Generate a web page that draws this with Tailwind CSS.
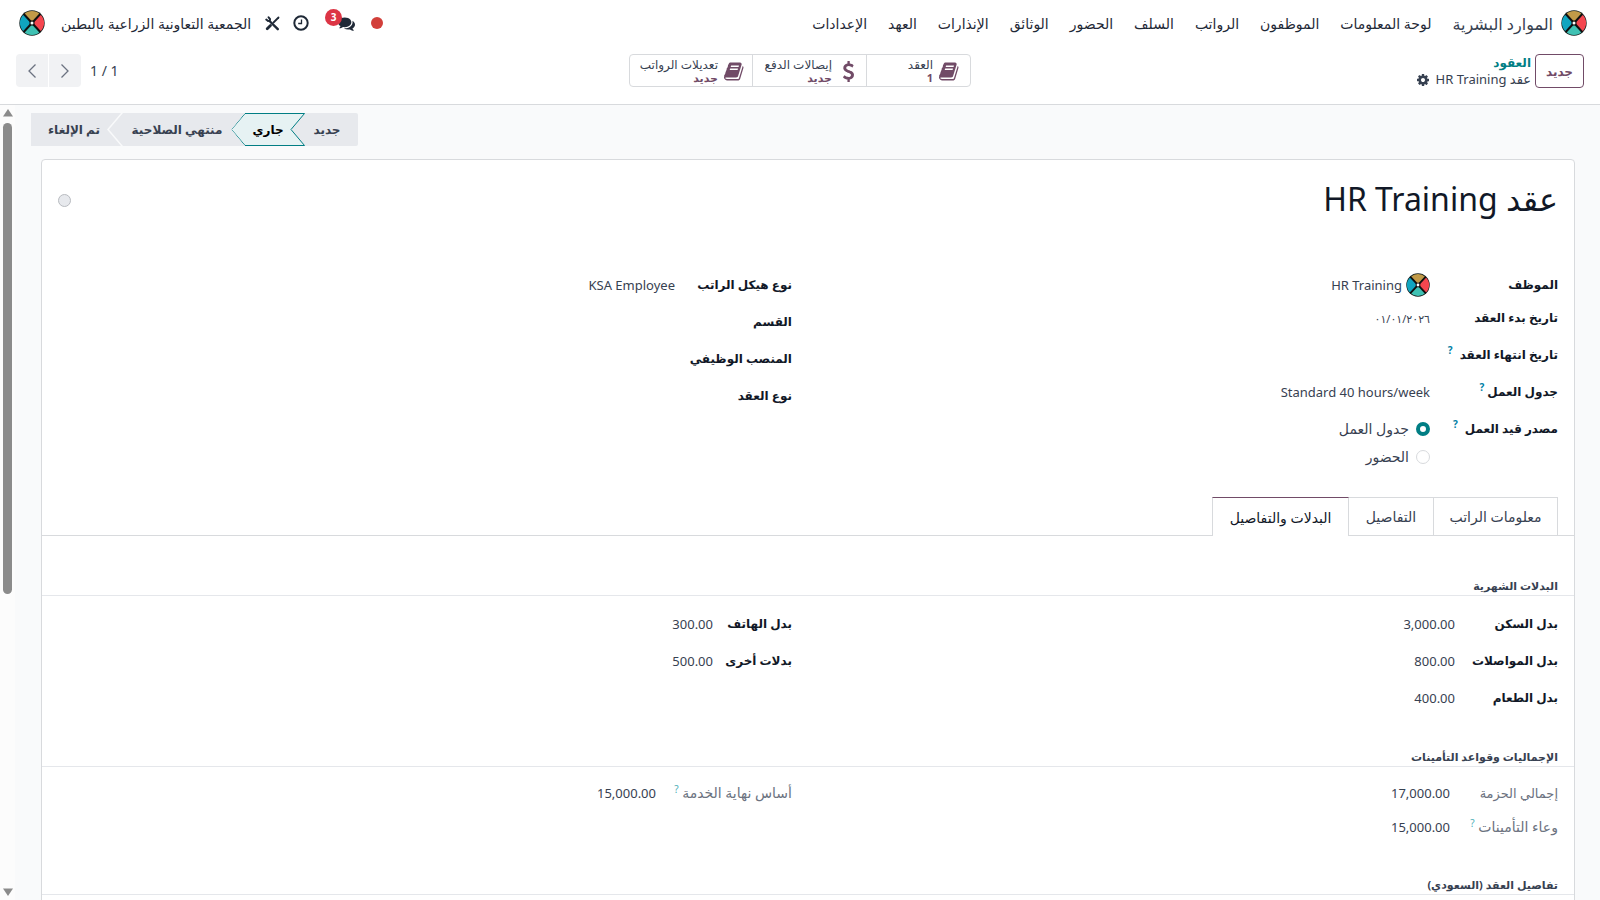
<!DOCTYPE html>
<html lang="ar" dir="rtl">
<head>
  <meta charset="UTF-8" />
  <meta name="viewport" content="width=device-width, initial-scale=1.0" />
  <title>عقد HR Training</title>
  <script src="https://cdn.jsdelivr.net/npm/@tailwindcss/browser@4"></script>
</head>
<body class="h-screen flex flex-col overflow-hidden bg-white text-[13px] text-[#374151] font-['Noto_Sans','DejaVu_Sans',sans-serif]">
  <!-- Shared icons -->
  <svg class="hidden" xmlns="http://www.w3.org/2000/svg">
    <symbol id="logo" viewBox="0 0 26 26">
      <circle cx="13" cy="13" r="12.700" fill="#14201f" />
      <path d="M13 13 5 4.200a11.500 11.500 0 0 1 16 0z" fill="#c19a48" />
      <path d="M13 13 5 21.800a11.500 11.500 0 0 0 16 0z" fill="#3fc1b3" />
      <path d="M13 13 5 4.200a11.500 11.500 0 0 0 0 17.600z" fill="#10a5c0" />
      <path d="M13 13 21 4.200a11.500 11.500 0 0 1 0 17.600z" fill="#f5464f" />
      <path d="M4.500 3.800 21.500 22.200M21.500 3.800 4.500 22.200" stroke="#101010" stroke-width="2" />
      <rect x="10.500" y="10.500" width="5" height="5" rx="1" fill="#101010" />
      <circle cx="13" cy="13" r="1.500" fill="#fff" />
    </symbol>
    <symbol id="book" viewBox="0 0 1792 1792">
      <path d="M1639 478q40 57 18 129l-275 906q-19 64-76.500 107.500t-122.500 43.500h-923q-77 0-148.500-53.500t-99.500-131.500q-24-67-2-127 0-4 3-27t4-37q1-8-3-21.500t-3-19.500q2-11 8-21t16.500-23.500 16.500-23.500q23-38 45-91.500t30-91.500q3-10 .5-30t-.5-28q3-11 17-28t17-23q21-36 42-92t25-90q1-9-2.500-32t.5-28q4-13 22-30.500t22-22.500q19-26 42.500-84.500t27.500-96.500q1-8-3-25.500t-2-26.500q2-8 9-18t18-23 17-21q8-12 16.500-30.500t15-35 16-36 19.500-32 26.500-23.500 36-11.500 47.500 5.500l-1 3q38-9 51-9h761q74 0 114 56t18 130l-274 906q-36 119-71.500 153.500t-128.500 34.500h-869q-27 0-38 15-11 16-1 43 24 70 144 70h923q29 0 56-15.500t35-41.500l300-987q7-22 5-57 38 15 59 43zm-1064 2q-4 13 2 22.500t20 9.500h608q13 0 25.500-9.500t16.500-22.500l21-64q4-13-2-22.500t-20-9.500h-608q-13 0-25.500 9.500t-16.500 22.500zm-83 256q-4 13 2 22.500t20 9.500h608q13 0 25.500-9.500t16.500-22.500l21-64q4-13-2-22.500t-20-9.500h-608q-13 0-25.500 9.500t-16.500 22.500z" />
    </symbol>
  </svg>

  <!-- Top navbar -->
  <header class="flex h-[46px] shrink-0 items-center ps-[13px] pe-[19px] text-[#1f2937]">
    <a href="#" aria-label="الرئيسية"><svg class="size-[26px]"><use href="#logo" /></svg></a>
    <a href="#" class="ms-2 me-[21px] pt-px text-[16px] text-[#374151]">الموارد البشرية</a>
    <nav class="flex items-center gap-[21px] pt-px text-[14px]">
      <a href="#">لوحة المعلومات</a>
      <a href="#">الموظفون</a>
      <a href="#">الرواتب</a>
      <a href="#">السلف</a>
      <a href="#">الحضور</a>
      <a href="#">الوثائق</a>
      <a href="#">الإنذارات</a>
      <a href="#">العهد</a>
      <a href="#">الإعدادات</a>
    </nav>
    <div class="ms-auto flex items-center">
      <span class="me-4 size-3 rounded-full bg-[#d23f3a]"></span>
      <button class="relative me-4" aria-label="المحادثات">
        <svg class="size-[17px]" viewBox="0 0 1792 1792" fill="currentColor"><path d="M1408 768q0 139-94 257t-256.500 186.500-353.500 68.500q-86 0-176-16-124 88-278 128-36 9-86 16h-3q-11 0-20.500-8t-11.500-21q-1-3-1-6.500t.5-6.500 2-6l2.500-5t3.500-5.500 4-5 4.500-5 4-4.500q5-6 23-25t26-29.500 22.500-29 25-38.500 20.500-44q-124-72-195-177t-71-224q0-139 94-257t256.500-186.500 353.500-68.500 353.500 68.500 256.500 186.500 94 257zm384 256q0 120-71 224.500t-195 176.500q10 24 20.500 44t25 38.500 22.500 29 26 29.500 23 25q1 1 4 4.500t4.500 5 4 5 3.500 5.500l2.500 5t2 6 .5 6.500-1 6.500q-3 14-13 22t-22 7q-50-7-86-16-154-40-278-128-90 16-176 16-271 0-472-132 58 4 88 4 161 0 309-45t264-129q125-92 192-212t67-254q0-77-23-152 129 71 204 178t75 230z" /></svg>
        <span class="absolute -top-[6px] left-[-13px] flex size-[17px] items-center justify-center rounded-full bg-[#dc3545] text-[10px] font-bold text-white">3</span>
      </button>
      <button class="ms-[13px] me-[13px]" aria-label="الأنشطة">
        <svg class="size-4" viewBox="0 0 16 16" fill="none" stroke="currentColor" stroke-width="2"><circle cx="8" cy="8" r="6.700" /><path d="M8.500 4.500v4H5.200" stroke-width="1.300" /></svg>
      </button>
      <button class="me-[14px]" aria-label="أدوات المطور">
        <svg class="size-[15px]" viewBox="0 0 15 15" fill="none" stroke="currentColor" stroke-linecap="round"><path d="M5 5.500 12.800 13.200" stroke-width="2.400" /><path d="M1.300 3.600 3 5 4.800 4.800 5 3 3.600 1.300" stroke-width="2" /><path d="M13.500 1.500 8.500 6.500" stroke-width="1.800" /><path d="M5.500 9.500 2.200 12.800" stroke-width="2.800" /></svg>
      </button>
      <button class="me-4 pt-px text-[14px]">الجمعية التعاونية الزراعية بالبطين</button>
      <button aria-label="المستخدم"><svg class="size-[26px]"><use href="#logo" /></svg></button>
    </div>
  </header>

  <!-- Control panel -->
  <div class="grid h-[59px] shrink-0 grid-cols-[1fr_auto_1fr] items-start border-b border-[#d8dadd] px-4 pt-2">
    <div class="flex gap-1">
      <button class="h-[34px] w-[49px] rounded border border-[#714b67] pt-px text-[12px] font-bold text-[#714b67]">جديد</button>
      <div class="text-[13px] leading-[17px]">
        <a href="#" class="block text-[12px] font-bold text-[#017e84]">العقود</a>
        <div class="flex items-center gap-[6px]">
          <span>عقد HR Training</span>
          <button aria-label="إجراءات"><svg class="size-[14px]" viewBox="0 0 1792 1792" fill="currentColor"><path d="M1152 896q0-106-75-181t-181-75-181 75-75 181 75 181 181 75 181-75 75-181zm512-109v222q0 12-8 23t-20 13l-185 28q-19 54-39 91 35 50 107 138 10 12 10 25t-9 23q-27 37-99 108t-94 71q-12 0-26-9l-138-108q-44 23-91 38-16 136-29 186-7 28-36 28h-222q-14 0-24.500-8.500t-11.500-21.500l-28-184q-49-16-90-37l-141 107q-10 9-25 9-14 0-25-11-126-114-165-168-7-10-7-23 0-12 8-23 15-21 51-66.500t54-70.500q-27-50-41-99l-183-27q-13-2-21-12.500t-8-23.500v-222q0-12 8-23t19-13l186-28q14-46 39-92-40-57-107-138-10-12-10-24 0-10 9-23 26-36 98.500-107.500t94.500-71.500q13 0 26 10l138 107q44-23 91-38 16-136 29-186 7-28 36-28h222q14 0 24.500 8.500t11.500 21.500l28 184q49 16 90 37l142-107q9-9 24-9 13 0 25 10 129 119 165 170 7 8 7 22 0 12-8 23-15 21-51 66.500t-54 70.500q26 50 41 98l183 28q13 2 21 12.500t8 23.500z" /></svg></button>
        </div>
      </div>
    </div>
    <div class="flex h-[33px] divide-x divide-[#d8dadd] rounded border border-[#d8dadd] text-[12px] leading-[13px]">
      <button class="flex w-[104px] items-center gap-[6px] ps-[10px] pt-px text-start">
        <svg class="size-[21px] fill-[#714b67]"><use href="#book" /></svg>
        <span>العقد<span class="block text-[11px] leading-[13px] font-bold text-[#714b67]">1</span></span>
      </button>
      <button class="flex w-[114px] items-center gap-[6px] ps-[7px] pt-px text-start">
        <svg class="size-[21px] fill-[#714b67]" viewBox="0 0 1792 1792"><path d="M1362 1185q0 153-99.500 263.500t-258.500 136.500v175q0 14-9 23t-23 9h-135q-13 0-22.500-9.500t-9.500-22.500v-175q-66-9-127.500-31t-101.500-44.500-74-48-46.500-37.500-17.500-18q-17-21-2-41l103-135q7-10 23-12 15-2 24 9l2 2q113 99 243 125 37 8 74 8 81 0 142.500-43t61.500-122q0-28-15-53t-33.500-42-58.500-37.500-66-32-80-32.500q-39-16-61.500-25t-61.500-26.500-62.500-31-56.500-35.500-53.500-42.500-43.500-49-35.500-58-21-66.500-8.500-78q0-138 98-242t255-134v-180q0-13 9.500-22.500t22.500-9.500h135q14 0 23 9t9 23v176q57 6 110.500 23t87 33.500 63.500 37.500 39 29 15 14q17 18 5 38l-81 146q-8 15-23 16-14 3-27-7-3-3-14.500-12t-39-26.500-58.500-32-74.500-26-85.500-11.500q-95 0-155 43t-60 111q0 26 8.500 48t29.500 41.500 39.500 33 56 31 60.500 27 70 27.500q53 20 81 31.500t76 35 75.500 42.500 62 50 53 63.500 31.500 76.500 13 94z" /></svg>
        <span>إيصالات الدفع<span class="block text-[11px] leading-[13px] font-bold text-[#714b67]">جديد</span></span>
      </button>
      <button class="flex w-[122px] items-center gap-[6px] ps-[7px] pt-px text-start">
        <svg class="size-[21px] fill-[#714b67]"><use href="#book" /></svg>
        <span class="whitespace-nowrap">تعديلات الرواتب<span class="block text-[11px] leading-[13px] font-bold text-[#714b67]">جديد</span></span>
      </button>
    </div>
    <div class="flex items-center justify-end gap-[9px]">
      <span dir="ltr" class="text-[14px]">1 / 1</span>
      <div class="flex gap-px text-[#6b7280]">
        <button class="flex h-[33px] w-8 items-center justify-center rounded-r bg-[#f1f2f4]" aria-label="السابق"><svg class="h-[14px] w-2" viewBox="0 0 8 14" fill="none" stroke="currentColor" stroke-width="1.300"><path d="M.5.5 7 7 .5 13.500" /></svg></button>
        <button class="flex h-[33px] w-8 items-center justify-center rounded-l bg-[#f1f2f4]" aria-label="التالي"><svg class="h-[14px] w-2" viewBox="0 0 8 14" fill="none" stroke="currentColor" stroke-width="1.300"><path d="M7.500.5 1 7l6.500 6.500" /></svg></button>
      </div>
    </div>
  </div>

  <div class="flex min-h-0 flex-1">
    <main class="min-w-0 flex-1 overflow-hidden bg-[#f9fafb] ps-[25px] pe-4 pt-2">
      <!-- Status bar -->
      <div class="flex h-[33px] justify-end text-[12px] font-bold">
        <button class="w-[66px] rounded-r-[2px] bg-[#e7e9ed] pe-1">جديد</button>
        <button class="relative -ms-[13px] w-[74px] text-black">
          <svg class="absolute inset-0 size-full" viewBox="0 0 74 33" fill="#e6f2f3" stroke="#017e84"><path d="M73.500.5H14L.5 16.500 14 32.500h59.500L60 16.500z" /></svg>
          <span class="relative">جاري</span>
        </button>
        <button class="relative -ms-[14px] w-[136px]">
          <svg class="absolute inset-0 size-full" viewBox="0 0 136 33" fill="#e7e9ed"><path d="M136 0H14L0 16.500 14 33h122L122.500 16.500z" /></svg>
          <span class="relative">منتهي الصلاحية</span>
        </button>
        <button class="relative -ms-[12px] w-[90px] ps-1">
          <svg class="absolute inset-0 size-full" viewBox="0 0 90 33" fill="#e7e9ed"><path d="M90 0H0v33h90L76 16.500z" /></svg>
          <span class="relative">تم الإلغاء</span>
        </button>
      </div>

      <!-- Form sheet -->
      <div class="me-[10px] mt-[13px] rounded border border-[#d8dadd] bg-white pt-4 pb-10">
        <div class="flex h-[97px] items-start justify-between px-4">
          <h1 class="text-[32px] leading-[46px] text-[#111827]">عقد HR Training</h1>
          <button class="mt-[18px] size-[13px] rounded-full border border-[#b8bbc0] bg-[#e7e9ed]" aria-label="الحالة"></button>
        </div>

        <div class="grid grid-cols-2 px-4 leading-6">
          <dl class="grid grid-cols-[128px_1fr] content-start">
            <dt class="h-[33px] text-[12px] leading-6 font-bold text-[#111827]">الموظف</dt>
            <dd class="flex h-6 items-center gap-1"><svg class="size-6"><use href="#logo" /></svg>HR Training</dd>
            <dt class="h-[37px] text-[12px] leading-6 font-bold text-[#111827]">تاريخ بدء العقد</dt>
            <dd><span dir="ltr" class="text-[11px]">٠١/٠١/٢٠٢٦</span></dd>
            <dt class="h-[37px] text-[12px] leading-6 font-bold text-[#111827]">تاريخ انتهاء العقد <sup class="ms-1 text-[10px] text-[#0180a5]">?</sup></dt>
            <dd></dd>
            <dt class="h-[37px] text-[12px] leading-6 font-bold text-[#111827]">جدول العمل <sup class="text-[10px] text-[#0180a5]">?</sup></dt>
            <dd>Standard 40 hours/week</dd>
            <dt class="text-[12px] leading-6 font-bold text-[#111827]">مصدر قيد العمل <sup class="ms-1 text-[10px] text-[#0180a5]">?</sup></dt>
            <dd class="flex flex-col gap-1 text-[14px] leading-6">
              <label class="flex items-center gap-[7px]"><input type="radio" name="source" checked class="size-[14px] appearance-none rounded-full border border-[#d8dadd] checked:border-4 checked:border-[#017e84]" />جدول العمل</label>
              <label class="flex items-center gap-[7px]"><input type="radio" name="source" class="size-[14px] appearance-none rounded-full border border-[#d8dadd] checked:border-4 checked:border-[#017e84]" />الحضور</label>
            </dd>
          </dl>
          <dl class="grid auto-rows-[37px] grid-cols-[117px_1fr] content-start ps-4">
            <dt class="text-[12px] leading-6 font-bold text-[#111827]">نوع هيكل الراتب</dt>
            <dd>KSA Employee</dd>
            <dt class="text-[12px] leading-6 font-bold text-[#111827]">القسم</dt>
            <dd></dd>
            <dt class="text-[12px] leading-6 font-bold text-[#111827]">المنصب الوظيفي</dt>
            <dd></dd>
            <dt class="text-[12px] leading-6 font-bold text-[#111827]">نوع العقد</dt>
            <dd></dd>
          </dl>
        </div>

        <!-- Notebook tabs -->
        <div class="mt-7 flex h-[39px] border-b border-[#d8dadd] px-4 text-[14px]" role="tablist">
          <button role="tab" class="w-[125px] border border-b-0 border-[#d8dadd]">معلومات الراتب</button>
          <button role="tab" class="w-[84px] border-t border-[#d8dadd]">التفاصيل</button>
          <button role="tab" aria-selected="true" class="-mb-px w-[137px] border-x border-t border-[#d8dadd] border-t-[#714b67] bg-white text-[#111827]">البدلات والتفاصيل</button>
        </div>

        <h2 class="mt-10 h-5 border-b border-[#e5e7eb] px-4 text-[11px] leading-5 font-bold">البدلات الشهرية</h2>
        <div class="mt-4 grid grid-cols-2 px-4 leading-6">
          <dl class="grid auto-rows-[37px] grid-cols-[103px_1fr]">
            <dt class="text-[12px] leading-6 font-bold text-[#111827]">بدل السكن</dt>
            <dd>3,000.00</dd>
            <dt class="text-[12px] leading-6 font-bold text-[#111827]">بدل المواصلات</dt>
            <dd>800.00</dd>
            <dt class="text-[12px] leading-6 font-bold text-[#111827]">بدل الطعام</dt>
            <dd>400.00</dd>
          </dl>
          <dl class="grid auto-rows-[37px] grid-cols-[79px_1fr] ps-4">
            <dt class="text-[12px] leading-6 font-bold text-[#111827]">بدل الهاتف</dt>
            <dd>300.00</dd>
            <dt class="text-[12px] leading-6 font-bold text-[#111827]">بدلات أخرى</dt>
            <dd>500.00</dd>
          </dl>
        </div>

        <h2 class="mt-6 h-5 border-b border-[#e5e7eb] px-4 text-[11px] leading-5 font-bold">الإجماليات وقواعد التأمينات</h2>
        <div class="mt-[14px] grid grid-cols-2 px-4 leading-6">
          <dl class="grid auto-rows-[34px] grid-cols-[108px_1fr]">
            <dt class="text-[13px] text-[#6b7280]">إجمالي الحزمة</dt>
            <dd>17,000.00</dd>
            <dt class="text-[14px] leading-6 text-[#6b7280]">وعاء التأمينات <sup class="text-[10px] text-[#4db0b8]">?</sup></dt>
            <dd>15,000.00</dd>
          </dl>
          <dl class="grid auto-rows-[34px] grid-cols-[136px_1fr] ps-4">
            <dt class="text-[14px] leading-6 text-[#6b7280]">أساس نهاية الخدمة <sup class="text-[10px] text-[#4db0b8]">?</sup></dt>
            <dd>15,000.00</dd>
          </dl>
        </div>

        <h2 class="mt-[26px] h-5 border-b border-[#e5e7eb] px-4 text-[11px] leading-5 font-bold">تفاصيل العقد (السعودي)</h2>
      </div>
    </main>

    <!-- Scrollbar -->
    <div class="flex w-[15px] flex-col items-center bg-[#fcfcfc] py-1">
      <svg class="h-2 w-[10px] shrink-0" viewBox="0 0 10 8" fill="#8b8b8b"><path d="M5 0 10 7.500H0z" /></svg>
      <div class="mt-[6px] h-[471px] w-[9px] rounded-full bg-[#8b8b8b]"></div>
      <svg class="mt-auto h-2 w-[10px] shrink-0" viewBox="0 0 10 8" fill="#8b8b8b"><path d="M5 8 0 .5h10z" /></svg>
    </div>
  </div>
</body>
</html>
